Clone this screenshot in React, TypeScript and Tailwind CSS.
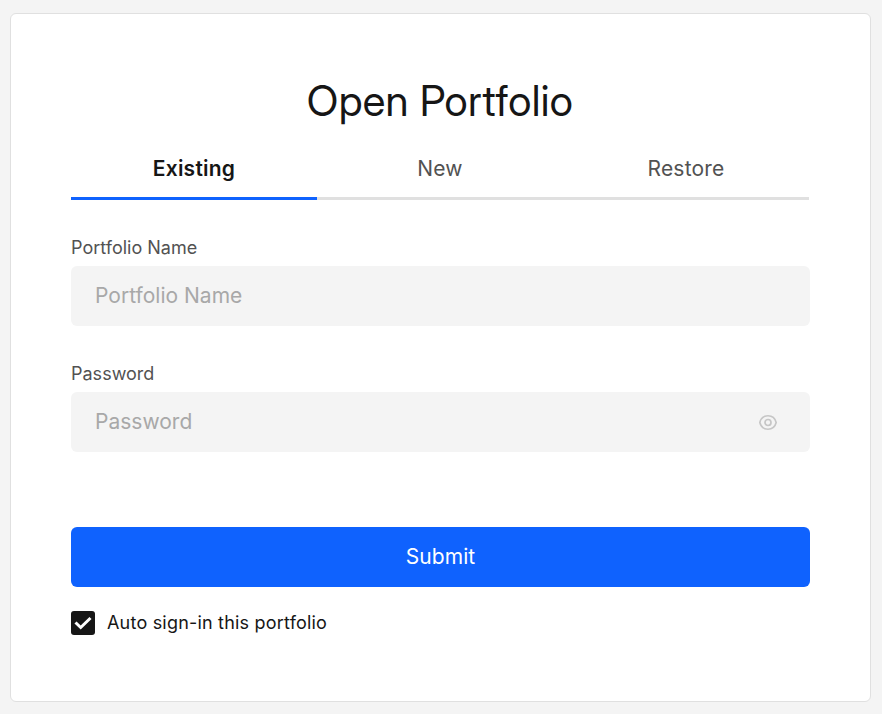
import React, { useState } from 'react';

const TABS = ['Existing', 'New', 'Restore'];

const EyeIcon: React.FC = () => (
  <svg className="w-[18px] h-[18px] mt-px" viewBox="0 0 18 18" fill="none" stroke="currentColor" strokeWidth="1.7">
    <path d="M0.8 8.5C1.8 4.6 5 1.75 9 1.75S16.2 4.6 17.2 8.5C16.2 12.4 13 15.25 9 15.25S1.8 12.4 0.8 8.5Z" />
    <circle cx="9" cy="8.5" r="3" />
  </svg>
);

const App: React.FC = () => {
  const [activeTab, setActiveTab] = useState('Existing');
  const [autoSignIn, setAutoSignIn] = useState(true);

  return (
    <div className="h-[714px] bg-[#f4f4f4] pt-[13px] pl-[10px] pr-[11px] font-['Inter',sans-serif] text-[#161616]">
      <form className="h-[689px] bg-white border border-[#e0e0e0] rounded-md px-[60px] pt-[59px]" onSubmit={e => e.preventDefault()}>
        <h1 className="text-center text-[42px] leading-[56px] tracking-[0.35px] pr-px font-['Inter_Display','Inter',sans-serif] [font-variation-settings:'opsz'_32]">Open Portfolio</h1>

        {/* Tabs */}
        <div className="grid grid-cols-3 mt-[11px] mr-px">
          {TABS.map(tab => (
            <button
              key={tab}
              type="button"
              onClick={() => setActiveTab(tab)}
              className={`h-[60px] pt-px text-[21px] border-b-[3px] ${activeTab === tab ? 'font-semibold tracking-[0.24px] border-[#0f62fe]' : 'tracking-[0.18px] text-[#525252] border-[#e0e0e0]'}`}
            >
              {tab}
            </button>
          ))}
        </div>

        <label className="block mt-9 text-[18px] leading-6 tracking-[0.01px] text-[#525252]">
          Portfolio Name
          <input
            type="text"
            placeholder="Portfolio Name"
            className="block w-full h-[60px] mt-[6px] px-6 pb-[2px] rounded-md bg-[#f4f4f4] text-[21px] placeholder:text-[#a8a8a8] outline-none"
          />
        </label>

        <label className="block mt-9 text-[18px] leading-6 tracking-[0.01px] text-[#525252]">
          Password
          <span className="flex items-center h-[60px] mt-[6px] pl-6 pr-[33px] rounded-md bg-[#f4f4f4] text-[#c6c6c6]">
            <input type="password" placeholder="Password" className="flex-1 text-[21px] placeholder:text-[#a8a8a8] outline-none" />
            <EyeIcon />
          </span>
        </label>

        <button type="submit" className="block w-full h-[60px] mt-[75px] rounded-md bg-[#0f62fe] text-white text-[21px] tracking-[0.04px]">
          Submit
        </button>

        <label className="flex items-center gap-3 mt-6 h-6 text-[18px] tracking-[0.2px]">
          <input type="checkbox" className="sr-only" checked={autoSignIn} onChange={e => setAutoSignIn(e.target.checked)} />
          <span className="flex items-center justify-center w-6 h-6 rounded-[3px] bg-[#161616]">
            {autoSignIn && (
              <svg className="w-6 h-6" viewBox="0 0 24 24" fill="none" stroke="white" strokeWidth="3">
                <path d="M4.5 11.5L9.7 16.5L19.5 7" />
              </svg>
            )}
          </span>
          <span className="pb-[2px]">Auto sign-in this portfolio</span>
        </label>
      </form>
    </div>
  );
};

export default App;
